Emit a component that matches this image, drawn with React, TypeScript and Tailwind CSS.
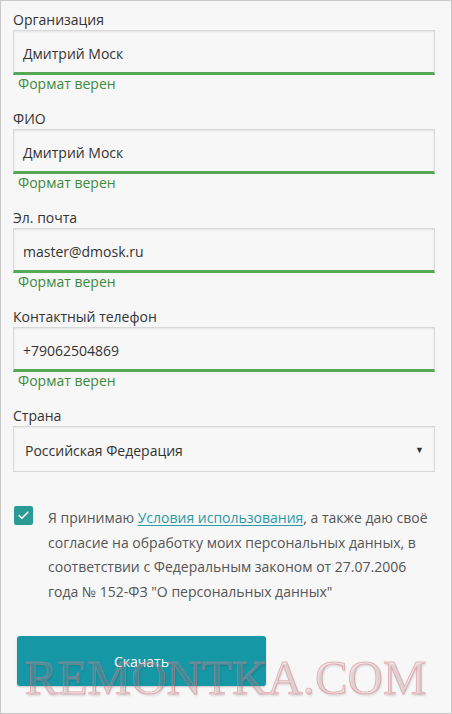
import { Check } from 'lucide-react';

const fields = [
  { label: 'Организация', value: 'Дмитрий Моск' },
  { label: 'ФИО', value: 'Дмитрий Моск' },
  { label: 'Эл. почта', value: 'master@dmosk.ru' },
  { label: 'Контактный телефон', value: '+79062504869' },
];

export default function App() {
  return (
    <div className="relative w-[452px] h-[714px] overflow-hidden bg-[#f7f7f7] border border-[#c8c8c8] pl-[12px] pr-[16px] pt-[9px] font-['Open_Sans',sans-serif] text-[14px] text-[#333]">
      {fields.map((f) => (
        <div key={f.label} className="mb-[14px]">
          <div className="h-[20px] leading-[20px]">{f.label}</div>
          <div className="h-[45px] flex items-center pl-[9px] pt-[3px] bg-[#f7f7f7] border border-[#d8d8d8] border-b-[3px] border-b-[#55a855] shadow-[inset_0_1px_2px_rgba(0,0,0,0.08)]">
            {f.value}
          </div>
          <div className="h-[20px] leading-[18px] pl-[5px] text-[#3d8b3d]">Формат верен</div>
        </div>
      ))}

      <div>
        <div className="h-[20px] leading-[20px] mt-[1px]">Страна</div>
        <div className="h-[46px] flex items-center justify-between pl-[11px] pr-[10px] pt-[2px] bg-[#f7f7f7] border border-[#d8d8d8] shadow-[inset_0_1px_2px_rgba(0,0,0,0.06)]">
          <span>Российская Федерация</span>
          <span className="text-[9px] text-[#333]">▼</span>
        </div>
      </div>

      <div className="flex mt-[33px]">
        <div className="w-[19px] h-[19px] shrink-0 rounded-[2px] bg-[#2a9a94] flex items-center justify-center mt-[1px] ml-[1px]">
          <Check className="w-[13px] h-[13px] text-white" strokeWidth={3} />
        </div>
        <p className="ml-[15px] leading-[24.5px] text-[#555] mt-[1px]">
          Я принимаю{' '}
          <span className="text-[#2a9aa5] underline underline-offset-2">Условия использования</span>, а также даю своё согласие на
          обработку моих персональных данных, в соответствии с Федеральным законом от 27.07.2006 года № 152-ФЗ "О
          персональных данных"
        </p>
      </div>

      <button className="mt-[32px] ml-[4px] w-[249px] h-[50px] rounded-[3px] bg-[#1697a6] text-white text-[14px] shadow-[0_1px_2px_rgba(0,0,0,0.2)]">
        Скачать
      </button>

      <div className="absolute left-[24px] top-[647px] pointer-events-none font-['Liberation_Serif',serif] text-[49px] leading-[60px] text-[rgba(235,170,175,0.18)] [-webkit-text-stroke:1px_rgba(215,120,130,0.5)] [text-shadow:1px_2px_2px_rgba(0,0,0,0.12)]">
        REMONTKA.COM
      </div>
    </div>
  );
}
